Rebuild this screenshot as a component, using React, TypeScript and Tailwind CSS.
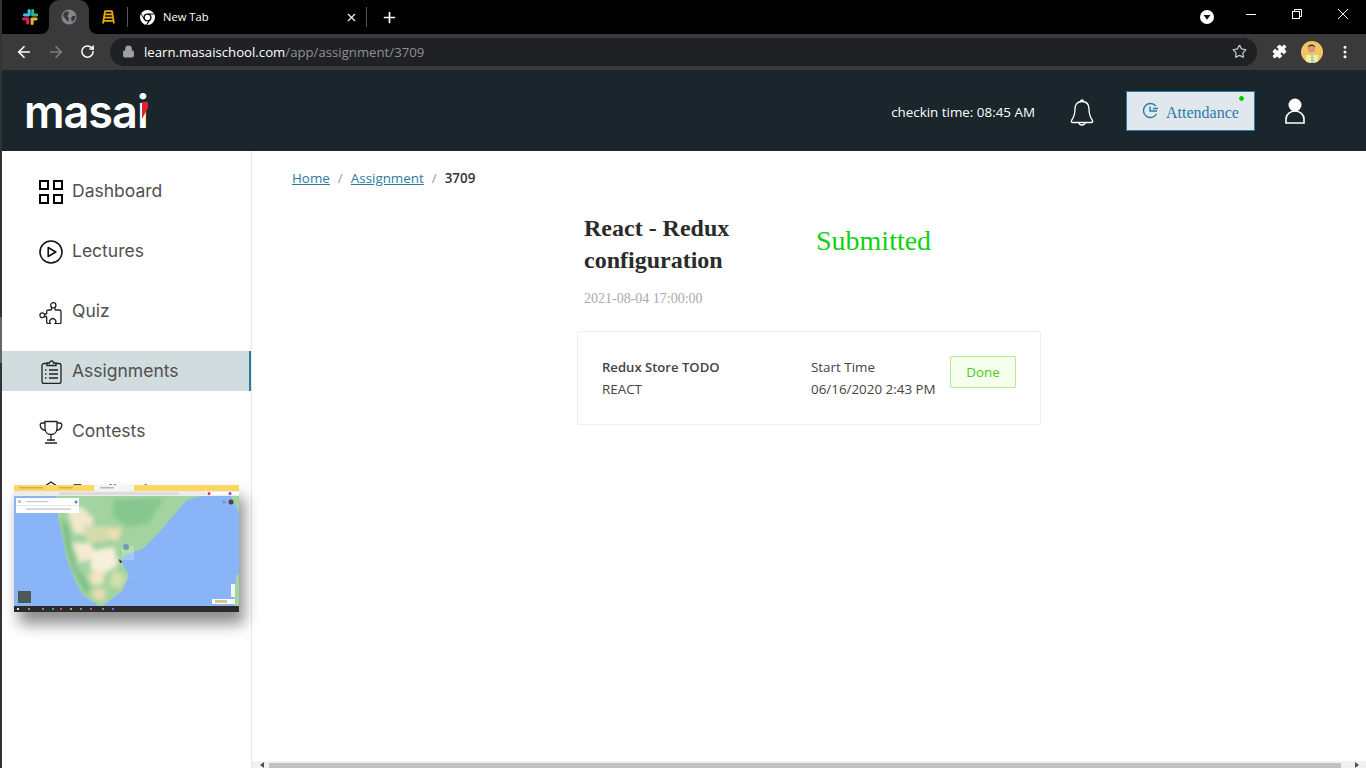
import { MoreVertical, Star, Puzzle, X, Plus, ArrowLeft, ArrowRight, RotateCw, Lock } from "lucide-react";

const menu = ["Dashboard", "Lectures", "Quiz", "Assignments", "Contests", "Feedback"];

function SlackLogo() {
  return (
    <svg width="16" height="16" viewBox="0 0 16 16">
      <rect x="5.6" y="0" width="3" height="7" rx="1.5" fill="#36c5f0" />
      <rect x="1" y="4.6" width="7" height="2.8" rx="1.4" fill="#36c5f0" />
      <rect x="9.2" y="0" width="3" height="7" rx="1.5" fill="#2eb67d" />
      <rect x="9.2" y="4.6" width="7" height="2.8" rx="1.4" fill="#2eb67d" />
      <rect x="8.6" y="8.6" width="7" height="2.8" rx="1.4" fill="#ecb22e" />
      <rect x="8.6" y="9" width="3" height="7" rx="1.5" fill="#ecb22e" />
      <rect x="0" y="8.6" width="7" height="2.8" rx="1.4" fill="#e01e5a" />
      <rect x="4.2" y="8.6" width="3" height="7" rx="1.5" fill="#e01e5a" />
    </svg>
  );
}

function GlobeIcon() {
  return (
    <svg width="16" height="16" viewBox="0 0 16 16">
      <circle cx="8" cy="8" r="7.5" fill="#80868b" />
      <path d="M3 3.5 L7 2 L8 5 L6 7 L8 9 L7 13 L4.5 10 L2 7Z M11 7 L14.5 7 L13.5 11 L11 13 L10 10Z" fill="#3a3a3a" />
    </svg>
  );
}

function LadderIcon() {
  return (
    <svg width="13" height="14" viewBox="0 0 13 14" fill="none" stroke="#e8a900" strokeWidth="1.7">
      <path d="M3 1 L1 13.5 M10 1 L12 13.5 M2.8 1.2 H10.2 M2.4 4.4 H10.6 M1.9 7.6 H11.1 M1.4 10.8 H11.6" />
    </svg>
  );
}

function ChromeIcon() {
  return (
    <svg width="15" height="15" viewBox="0 0 16 16">
      <circle cx="8" cy="8" r="8" fill="#fff" />
      <circle cx="8" cy="8" r="4.3" fill="#000" />
      <circle cx="8" cy="8" r="2.9" fill="#fff" />
      <path d="M8 3.7 H15 L14.2 4.8 H8Z M4.4 10.4 L1 4.5 L1.2 3.4 L5.4 10Z M10.9 11.2 L7.5 15.9 L6.4 15.8 L10 10.2Z" fill="#000" />
    </svg>
  );
}

function MasaiLogo() {
  return (
    <div className="relative mt-[2px]">
      <span className="font-['Inter',sans-serif] text-[45px] leading-none font-semibold tracking-[-1px] text-white">
        masai
      </span>
      <svg className="absolute top-[13px] right-0" width="6" height="24" viewBox="0 0 6 24">
        <path d="M0 17 L6 6 V0 H0Z" fill="#e0202b" />
      </svg>
    </div>
  );
}

function Avatar() {
  return (
    <svg width="22" height="22" viewBox="0 0 22 22">
      <defs>
        <clipPath id="avatarClip">
          <circle cx="11" cy="11" r="11" />
        </clipPath>
      </defs>
      <g clipPath="url(#avatarClip)">
        <rect width="22" height="22" fill="#f2c462" />
        <rect x="5" y="14" width="12" height="8" fill="#f0ef9c" />
        <path d="M10 13 H12 L13 22 H10Z" fill="#a7d0c5" />
        <circle cx="10.5" cy="8" r="3.6" fill="#d99a72" />
        <path d="M6.8 6.5 C7 2.5 14 2.5 14.2 6.5 L12 5 H9Z" fill="#3a2c25" />
      </g>
    </svg>
  );
}

function MenuIcon({ name }: { name: string }) {
  const s = { fill: "none", stroke: "#222", strokeWidth: 1.3 };
  if (name === "Dashboard") {
    return (
      <svg width="24" height="24" viewBox="0 0 24 24" fill="none" stroke="#000" strokeWidth="2">
        <rect x="1" y="1" width="8" height="8" />
        <rect x="15" y="1" width="8" height="8" />
        <rect x="1" y="15" width="8" height="8" />
        <rect x="15" y="15" width="8" height="8" />
      </svg>
    );
  }
  if (name === "Lectures") {
    return (
      <svg width="24" height="24" viewBox="0 0 24 24" fill="none" stroke="#111" strokeWidth="1.6">
        <circle cx="12" cy="12" r="11" />
        <path d="M9.2 7.5 L16.8 12 L9.2 16.5Z" strokeLinejoin="round" />
      </svg>
    );
  }
  if (name === "Quiz") {
    return (
      <svg width="24" height="24" viewBox="0 0 24 24" {...s}>
        <circle cx="14.3" cy="5.3" r="2.6" />
        <circle cx="3.3" cy="15.3" r="2.4" />
        <path d="M12.500 7.500 V10 M16 7.500 V10 M5.300 14 H7.700 M5.300 16.500 H7.700" />
        <path d="M7.700 14 V11.500 Q7.700 10 9.500 10 H12.500 M16 10 H20.500 Q22 10 22 11.500 V22 Q22 23.700 20.500 23.700 H16 A3 3 0 1 0 11.500 23.700 H9.500 Q7.700 23.700 7.700 22 V16.500" />
      </svg>
    );
  }
  if (name === "Assignments") {
    return (
      <svg width="24" height="24" viewBox="0 0 24 24" {...s}>
        <path d="M8 3.5 H5 A2 2 0 0 0 3 5.5 V21.5 A2 2 0 0 0 5 23.5 H20 A2 2 0 0 0 22 21.5 V5.5 A2 2 0 0 0 20 3.5 H17" />
        <path d="M8 5.5 V3 H10.5 A2 2 0 0 1 14.5 3 H17 V5.5Z" />
        <path d="M10 10 H19 M10 14 H19 M10 18 H19 M6 10 H7.4 M6 14 H7.4 M6 18 H7.4" />
      </svg>
    );
  }
  if (name === "Contests") {
    return (
      <svg width="24" height="24" viewBox="0 0 24 24" {...s}>
        <path d="M6 1.5 H18 V8 C18 12 15.5 14.5 12 14.5 C8.500 14.5 6 12 6 8Z" />
        <path d="M6 3 H3 C1 3 1 5 1.500 6.500 C2 8.500 4 10 6.500 10.500 M18 3 H21 C23 3 23 5 22.500 6.500 C22 8.500 20 10 17.500 10.500" />
        <path d="M12 14.500 V21 M8 20 H16 M6 23 H18" />
      </svg>
    );
  }
  return (
    <svg width="24" height="24" viewBox="0 0 24 24" {...s}>
      <path d="M3 8 L12 2 L21 8 V22 H3Z" />
    </svg>
  );
}

function MapThumb() {
  return (
    <svg className="block blur-[0.4px]" width="225" height="127" viewBox="0 0 225 127">
      <defs>
        <filter id="soft" x="-10%" y="-10%" width="120%" height="120%">
          <feGaussianBlur stdDeviation="0.5" />
        </filter>
        <filter id="softer" x="-20%" y="-20%" width="140%" height="140%">
          <feGaussianBlur stdDeviation="2" />
        </filter>
        <clipPath id="mapClip">
          <rect y="11" width="225" height="110" />
        </clipPath>
        <clipPath id="landClip">
          <path d="M42 11 L44 31 L53 75 L62 98 L70 111 L87 122 L108 106 L115 91 L107 76 L110 71 L130 63 L147 45 L173 15 L187 11Z" />
        </clipPath>
      </defs>
      <rect width="225" height="127" fill="#8ab4f8" />
      <g clipPath="url(#mapClip)">
        <path
          d="M42 11 L44 31 L53 75 L62 98 L70 111 L87 122 L108 106 L115 91 L107 76 L110 71 L130 63 L147 45 L173 15 L187 11Z"
          fill="#a3d3a0"
          filter="url(#soft)"
        />
        <g clipPath="url(#landClip)">
          <g filter="url(#softer)">
            <path d="M100 14 L150 13 L135 38 L112 42 L98 30Z" fill="#86c790" />
            <path d="M52 22 L68 22 L80 34 L74 50 L60 48Z" fill="#f1e8cc" />
            <path d="M68 40 L98 42 L92 56 L74 58Z" fill="#d4dcae" />
            <path d="M94 44 L108 42 L104 56 L94 54Z" fill="#f0dfae" />
            <path d="M58 58 L76 58 L84 72 L66 78Z" fill="#f4ead2" />
            <path d="M78 66 L100 62 L104 80 L88 90 L76 84Z" fill="#f7efdb" />
            <path d="M74 88 L92 86 L88 100 L78 100Z" fill="#f1e4c0" />
            <path d="M78 104 L92 104 L90 116 L80 114Z" fill="#eadcae" />
            <path d="M47 34 L54 40 L60 72 L66 96 L60 88 L52 64Z" fill="#7cc089" />
            <path d="M66 84 L76 104 L72 110 L64 94Z" fill="#7cc089" />
            <path d="M100 84 L112 92 L106 104 L94 100Z" fill="#cfe0a8" />
          </g>
        </g>
        <path d="M217 11 H225 V28Z M222 90 H225 V121 H220Z" fill="#a3d3a0" filter="url(#soft)" />
        <rect x="108" y="61" width="12" height="14" fill="#fff" opacity="0.22" />
        <circle cx="112" cy="62" r="3" fill="#5f8db0" opacity="0.8" />
        <path d="M105 74 L108 77 L106 78Z" fill="#111" />
        <rect x="2" y="13" width="63" height="15" fill="#fff" />
        <rect x="2" y="20" width="63" height="0.6" fill="#d8d8d8" />
        <rect x="4" y="15" width="3" height="3" fill="#c4c4c4" />
        <circle cx="62" cy="17" r="1.500" fill="#4a80f0" />
        <rect x="12" y="16" width="22" height="1.200" fill="#c8c8c8" />
        <rect x="12" y="23.500" width="45" height="1.200" fill="#c0c0c0" />
        <rect x="4" y="106" width="13" height="12" fill="#4b5a55" />
        <rect x="198" y="114" width="23" height="5" fill="#fff" />
        <rect x="201" y="115" width="12" height="3" fill="#d8c98a" />
        <rect x="217" y="99" width="4" height="13" fill="#f4f4f4" />
        <circle cx="217" cy="17" r="2.500" fill="#5a3d35" />
        <circle cx="210" cy="17" r="1.500" fill="#6f8fc2" />
      </g>
      <rect width="225" height="6" fill="#fdd663" />
      <rect x="80" y="0" width="40" height="6" fill="#f4f4f4" />
      <rect x="5" y="2" width="24" height="1.500" fill="#c8b05a" />
      <rect x="45" y="2" width="14" height="1.500" fill="#c8b05a" />
      <rect x="86" y="2" width="14" height="1.500" fill="#b8b8b8" />
      <rect y="6" width="225" height="5" fill="#ececec" />
      <rect x="45" y="7" width="120" height="3" fill="#dcdcdc" />
      <rect x="192" y="7" width="33" height="3" fill="#ffffff" />
      <circle cx="195" cy="8.500" r="1.500" fill="#d03b3b" />
      <circle cx="216" cy="8.500" r="1.500" fill="#8c3fd0" />
      <rect y="121" width="225" height="6" fill="#2b2b2b" />
      <g fill="#7d8a96">
        <rect x="3" y="123" width="2" height="2" fill="#eee" />
        <rect x="14" y="123" width="2" height="2" />
        <rect x="28" y="123" width="2" height="2" />
        <rect x="38" y="123" width="2" height="2" fill="#2f9cc9" />
        <rect x="46" y="123" width="2" height="2" fill="#d05050" />
        <rect x="56" y="123" width="2" height="2" fill="#c7a24a" />
        <rect x="66" y="123" width="2" height="2" />
        <rect x="76" y="123" width="2" height="2" fill="#d05050" />
        <rect x="88" y="123" width="2" height="2" />
        <rect x="98" y="123" width="2" height="2" fill="#4a80f0" />
      </g>
    </svg>
  );
}

export default function App() {
  return (
    <div className="flex h-screen w-[1366px] overflow-hidden bg-white font-['Open_Sans',sans-serif]">
      {/* Left edge of the window */}
      <div className="flex w-[2px] shrink-0 flex-col bg-[#333333]">
        <div className="h-[317px]" />
        <div className="h-[46px] bg-[#666666]" />
      </div>

      <div className="flex min-w-0 flex-1 flex-col">
        {/* Chrome tabs */}
        <div className="flex h-[34px] shrink-0 items-center bg-black text-white">
          <div className="flex w-[47px] justify-center pl-[9px]">
            <SlackLogo />
          </div>
          <div className="relative flex h-full w-[40px] items-center justify-center rounded-t-[10px] bg-[#3a3a3a]">
            <GlobeIcon />
            <svg className="absolute bottom-0 -left-[8px]" width="8" height="8" viewBox="0 0 8 8">
              <path d="M8 0 V8 H0 A8 8 0 0 0 8 0Z" fill="#3a3a3a" />
            </svg>
            <svg className="absolute -right-[8px] bottom-0" width="8" height="8" viewBox="0 0 8 8">
              <path d="M0 0 V8 H8 A8 8 0 0 1 0 0Z" fill="#3a3a3a" />
            </svg>
          </div>
          <div className="flex w-[38px] justify-center">
            <LadderIcon />
          </div>
          <div className="h-[20px] w-px bg-[#555555]" />
          <div className="flex w-[238px] items-center pl-[12px]">
            <ChromeIcon />
            <span className="ml-[8px] text-[11.2px] leading-none">New Tab</span>
            <X className="mr-[8px] ml-auto h-[13px] w-[13px]" strokeWidth={2} />
          </div>
          <div className="h-[20px] w-px bg-[#555555]" />
          <Plus className="ml-[14px] h-[17px] w-[17px]" strokeWidth={2.4} />
          <div className="ml-auto flex items-center">
            <svg width="14" height="14" viewBox="0 0 14 14">
              <circle cx="7" cy="7" r="7" fill="#fff" />
              <path d="M3.500 5 H10.500 L7 9.800Z" fill="#111" />
            </svg>
            <svg className="ml-[32px] -mt-[6px]" width="10" height="10" viewBox="0 0 10 10" stroke="#fff">
              <path d="M0 5.500 H10" />
            </svg>
            <svg className="ml-[36px] -mt-[6px]" width="10" height="10" viewBox="0 0 10 10" fill="none" stroke="#fff">
              <rect x="0.500" y="2.500" width="7" height="7" />
              <path d="M2.500 2.500 V0.500 H9.500 V7.500 H7.500" />
            </svg>
            <svg className="mr-[18px] ml-[36px] -mt-[6px]" width="10" height="10" viewBox="0 0 10 10" stroke="#fff">
              <path d="M0 0 L10 10 M10 0 L0 10" />
            </svg>
          </div>
        </div>

        {/* Chrome toolbar */}
        <div className="flex h-[36px] shrink-0 items-center bg-[#3a3a3a] pb-[1px] text-white">
          <ArrowLeft className="ml-[13px] h-[18px] w-[18px]" strokeWidth={2.3} />
          <ArrowRight className="ml-[14px] h-[18px] w-[18px] text-[#7d7d7d]" strokeWidth={2.3} />
          <RotateCw className="ml-[15px] h-[15px] w-[15px]" strokeWidth={2.4} />
          <div className="ml-[15px] flex h-[28px] w-[1147px] items-center rounded-full bg-[#202124] pl-[12px]">
            <Lock className="h-[13px] w-[13px] text-[#a0a0a0]" fill="#a0a0a0" strokeWidth={2} />
            <span className="mt-[2px] ml-[9px] text-[13.2px] leading-none">
              learn.masaischool.com<span className="text-[#8f9094]">/app/assignment/3709</span>
            </span>
            <Star className="mr-[10px] ml-auto h-[15px] w-[15px] text-[#c4c4c4]" strokeWidth={2} />
          </div>
          <Puzzle className="ml-[15px] h-[15px] w-[15px]" fill="#fff" strokeWidth={1.5} />
          <div className="ml-[14px]">
            <Avatar />
          </div>
          <MoreVertical className="ml-[14px] h-[16px] w-[16px]" strokeWidth={2.5} />
        </div>

        {/* Site header */}
        <header className="flex h-[81px] shrink-0 items-center bg-[#1a252c] text-white">
          <div className="ml-[22px]">
            <MasaiLogo />
          </div>
          <span className="mt-[4px] ml-auto text-[13.4px]">checkin time: 08:45 AM</span>
          <svg className="ml-[35px] mt-[3px]" width="24" height="27" viewBox="0 0 24 27" fill="none" stroke="#fff" strokeWidth="1.3">
            <path d="M12 2.500 C7 2.500 5 6 5 10 C5 15 4 18 1.500 21.500 C1 22.500 1.500 23.500 2.500 23.500 H21.500 C22.500 23.500 23 22.500 22.500 21.500 C20 18 19 15 19 10 C19 6 17 2.500 12 2.500Z" />
            <path d="M9 23.500 A3 2.500 0 0 0 15 23.500 M10.500 2.500 A1.500 1.500 0 0 1 13.500 2.500" />
          </svg>
          <div className="relative ml-[32px] flex h-[40px] w-[129px] items-center border border-[#2b7ba8] bg-[#e0e8ee] pl-[15px] font-['Liberation_Serif',serif] text-[16px] text-[#2b7ba8]">
            <svg width="17" height="17" viewBox="0 0 17 17" fill="none" stroke="#2b7ba8" strokeWidth="1.400">
              <path d="M14.500 12 A7 7 0 1 1 13.800 4" />
              <path d="M8 4.500 V9 H15 M11 6.500 H16" />
            </svg>
            <span className="mt-[5px] ml-[7px]">Attendance</span>
            <span className="absolute top-[3px] right-[9px] h-[7px] w-[7px] rounded-full border border-white bg-[#00c800]" />
          </div>
          <svg className="mr-[61px] ml-[30px]" width="20" height="26" viewBox="0 0 20 26">
            <circle cx="10" cy="7" r="6.500" fill="#fff" />
            <path d="M1 25 V21 A9 8 0 0 1 19 21 V25Z" fill="none" stroke="#fff" strokeWidth="1.600" />
          </svg>
        </header>

        <div className="flex min-h-0 flex-1">
          {/* Sidebar */}
          <aside className="relative w-[250px] shrink-0 border-r border-[#e6e8f0] pt-[20px]">
            <nav className="flex flex-col gap-[20px]">
              {menu.map((item) => (
                <div
                  key={item}
                  className={
                    item === "Assignments"
                      ? "flex h-[40px] items-center gap-[9px] border-r-2 border-[#2b7a9f] bg-[#d1dcde] pt-[2px] pl-[37px] font-['Inter',sans-serif] text-[17.5px] text-[#505050]"
                      : "flex h-[40px] items-center gap-[9px] pt-[2px] pl-[37px] font-['Inter',sans-serif] text-[17.5px] text-[#505050]"
                  }
                >
                  <MenuIcon name={item} />
                  <span className="-mt-[2px]">{item}</span>
                </div>
              ))}
            </nav>
            {/* Floating window preview */}
            <div className="absolute top-[334px] left-[12px] shadow-[5px_12px_14px_rgba(0,0,0,0.45)]">
              <MapThumb />
            </div>
          </aside>

          {/* Main */}
          <main className="flex min-w-0 flex-1 flex-col">
            <div className="min-h-0 flex-1">
              <div className="flex items-center pt-[17px] pl-[40px] text-[13.4px] leading-[20px]">
                <span className="text-[#2b7a9f] underline">Home</span>
                <span className="mx-[8px] text-[#999999]">/</span>
                <span className="text-[#2b7a9f] underline">Assignment</span>
                <span className="mx-[8px] text-[#999999]">/</span>
                <span className="font-semibold text-[#333333]">3709</span>
              </div>

              <div className="mx-auto mt-[24px] w-[464px]">
                <div className="grid grid-cols-2">
                  <h1 className="px-[7px] font-['Liberation_Serif',serif] text-[24px] leading-[32px] font-bold text-[#2b2b2b]">
                    React - Redux configuration
                  </h1>
                  <div className="px-[7px] pt-[11px] font-['Liberation_Serif',serif] text-[28px] leading-[36px] text-[#0fd10f]">
                    Submitted
                  </div>
                </div>
                <div className="mt-[13px] px-[7px] font-['Liberation_Serif',serif] text-[14px] leading-[20px] text-[#aaaaaa]">
                  2021-08-04 17:00:00
                </div>

                <div className="mt-[22px] flex h-[94px] items-center rounded-[2px] border border-[#eeeeee] pr-[24px] pl-[24px] text-[13.4px] text-[#444444]">
                  <div className="w-[209px] leading-[22px]">
                    <div className="text-[13.1px] font-semibold">Redux Store TODO</div>
                    <div>REACT</div>
                  </div>
                  <div className="w-[139px] leading-[22px]">
                    <div>Start Time</div>
                    <div className="whitespace-nowrap">06/16/2020 2:43 PM</div>
                  </div>
                  <div className="mb-[12px] flex h-[32px] w-[66px] items-center justify-center rounded-[2px] border border-[#b7eb8f] bg-[#f6ffed] text-[#52c41a]">
                    Done
                  </div>
                </div>
              </div>
            </div>

            {/* Horizontal scrollbar */}
            <div className="flex h-[7px] shrink-0 items-end bg-[#f1f1f1]">
              <div className="ml-[8px] h-0 w-0 border-y-[3px] border-r-[4px] border-y-transparent border-r-[#505050]" />
              <div className="ml-[5px] h-[5px] w-[1072px] bg-[#c1c1c1]" />
              <div className="ml-[14px] h-0 w-0 border-y-[3px] border-l-[4px] border-y-transparent border-l-[#505050]" />
            </div>
          </main>
        </div>
      </div>
    </div>
  );
}
